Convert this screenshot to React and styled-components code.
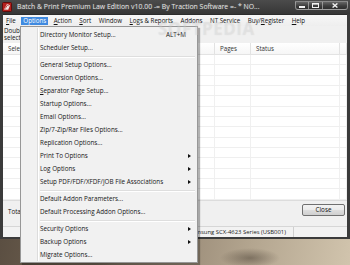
import styled, { createGlobalStyle } from "styled-components";

const GlobalStyle = createGlobalStyle`
  html, body {
    margin: 0;
    padding: 0;
  }
  body {
    width: 350px;
    height: 265px;
    overflow: hidden;
    font-family: "Open Sans", "DejaVu Sans", sans-serif;
  }
`;

const menuBarItems = [
  { label: "File", key: "F" },
  { label: "Options", active: true },
  { label: "Action", key: "A" },
  { label: "Sort", key: "S" },
  { label: "Window" },
  { label: "Logs & Reports", key: "L" },
  { label: "Addons" },
  { label: "NT Service" },
  { label: "Buy/Register", key: "R", keyAt: 4 },
  { label: "Help", key: "H" },
];

const optionItems = [
  { label: "Directory Monitor Setup...", shortcut: "ALT+M" },
  { label: "Scheduler Setup..." },
  { sep: true },
  { label: "General Setup Options..." },
  { label: "Conversion Options..." },
  { label: "Separator Page Setup...", underline: true },
  { label: "Startup Options..." },
  { label: "Email Options..." },
  { label: "Zip/7-Zip/Rar Files Options..." },
  { label: "Replication Options..." },
  { label: "Print To Options", sub: true },
  { label: "Log Options", sub: true },
  { label: "Setup PDF/FDF/XFDF/JOB File Associations", sub: true },
  { sep: true },
  { label: "Default Addon Parameters..." },
  { label: "Default Processing Addon Options..." },
  { sep: true },
  { label: "Security Options", sub: true },
  { label: "Backup Options", sub: true },
  { label: "Migrate Options..." },
];

const Desktop = styled.div`
  position: relative;
  width: 350px;
  height: 265px;
  overflow: hidden;
  background:
    radial-gradient(ellipse 40px 14px at 95px 252px, rgba(40, 32, 26, 0.55), transparent),
    radial-gradient(ellipse 30px 10px at 250px 258px, rgba(60, 50, 40, 0.45), transparent),
    linear-gradient(100deg, #4f443a 0%, #6e604f 28%, #958673 52%, #b3a58f 74%, #d1c4ad 100%);
`;

const Window = styled.div`
  width: 350px;
  height: 239px;
  background: #3b3b3b;
  display: flex;
  flex-direction: column;
`;

const TitleBar = styled.div`
  height: 14px;
  flex: none;
  display: flex;
  align-items: flex-start;
  padding-left: 2px;
  background: linear-gradient(#4b4b4b, #363636);
`;

const TitleIcon = styled.svg`
  flex: none;
  margin-top: 2px;
`;

const TitleText = styled.div`
  flex: 1;
  margin-left: 5px;
  font-size: 6.9px;
  line-height: 13px;
  color: #e4e4e4;
  white-space: nowrap;
  overflow: hidden;
  text-shadow: 0 0 2px rgba(255, 255, 255, 0.25);
`;

const Caption = styled.div`
  flex: none;
  display: flex;
  margin: 1px 2px 0 0;
`;

const CaptionButton = styled.div`
  width: ${(p) => p.w}px;
  height: 9px;
  box-sizing: border-box;
  border: 1px solid rgba(210, 210, 210, 0.55);
  border-left-width: ${(p) => (p.first ? 1 : 0)}px;
  border-radius: ${(p) => p.radius || "0"};
  background: linear-gradient(#666, #3d3d3d 55%, #2e2e2e);
  display: flex;
  align-items: center;
  justify-content: center;
`;

const Client = styled.div`
  flex: 1;
  min-height: 0;
  margin: 0 3px 2px;
  background: #f0f0f0;
  display: flex;
  flex-direction: column;
`;

const MenuBar = styled.div`
  height: 12px;
  flex: none;
  display: flex;
  align-items: center;
  gap: 3.5px;
  padding-left: 1px;
  background: linear-gradient(#f7f7f7, #eeeeee);
  border-top: 1px solid #2c2c2c;
  box-sizing: border-box;
`;

const MenuBarItem = styled.div`
  height: 8px;
  padding: 0 2px;
  font-size: 6.2px;
  line-height: 8px;
  white-space: nowrap;
  color: ${(p) => (p.active ? "#fff" : "#111")};
  background: ${(p) => (p.active ? "#3f8ae0" : "transparent")};
`;

const Hint = styled.div`
  height: 17px;
  flex: none;
  padding: 1px 0 0 1px;
  box-sizing: border-box;
  font-size: 6.2px;
  line-height: 7px;
  color: #111;
  white-space: nowrap;
  overflow: hidden;
`;

const Table = styled.div`
  height: 157px;
  flex: none;
  background: #fff;
  display: flex;
  flex-direction: column;
  overflow: hidden;
`;

const Columns = styled.div`
  display: grid;
  grid-template-columns: 212px 36px 89px 1fr;
  flex: none;
  height: ${(p) => p.h}px;
  box-sizing: border-box;
  border-bottom: 1px solid ${(p) => (p.head ? "#e3e3e3" : "#efefef")};
  background: ${(p) => (p.head ? "linear-gradient(#ffffff, #f6f6f6)" : "#fff")};
`;

const Cell = styled.div`
  border-right: 1px solid ${(p) => (p.head ? "#e2e2e2" : "#f0f0f0")};
  padding-left: 5px;
  font-size: 6.2px;
  line-height: 11px;
  color: #333;
  white-space: nowrap;
  overflow: hidden;
`;

const BottomPanel = styled.div`
  height: 26px;
  flex: none;
  box-sizing: border-box;
  border-top: 1px solid #dcdcdc;
  display: flex;
  justify-content: space-between;
  align-items: flex-start;
  padding: 0 2px 0 5px;
`;

const Total = styled.div`
  margin-top: 7px;
  font-size: 6.2px;
  line-height: 8px;
  color: #111;
`;

const CloseButton = styled.button`
  margin-top: 3px;
  width: 43px;
  height: 12px;
  padding: 0;
  border: 1px solid #707070;
  border-radius: 2px;
  background: linear-gradient(#f3f3f3 0%, #ebebeb 48%, #dddddd 52%, #cfcfcf 100%);
  font-family: "Open Sans", "DejaVu Sans", sans-serif;
  font-size: 6.3px;
  line-height: 10px;
  color: #111;
`;

const StatusBar = styled.div`
  height: 11px;
  flex: none;
  box-sizing: border-box;
  border-top: 1px solid #d6d6d6;
  display: flex;
  background: #f2f2f2;
`;

const StatusPanel = styled.div`
  width: ${(p) => p.w}px;
  flex: none;
  box-sizing: border-box;
  padding-left: 2px;
  border-right: 1px solid #cfcfcf;
  font-size: 5.9px;
  line-height: 10px;
  color: #222;
  white-space: nowrap;
  overflow: hidden;
`;

const Dropdown = styled.div`
  position: absolute;
  left: 20px;
  top: 26px;
  width: 178px;
  box-sizing: border-box;
  padding: 1px;
  border: 1px solid #979797;
  background: #f1f1f1;
  box-shadow: 2px 2px 1px rgba(0, 0, 0, 0.3);

  &::before {
    content: "";
    position: absolute;
    left: 16px;
    top: 1px;
    bottom: 1px;
    width: 1px;
    background: #dcdcdc;
    box-shadow: 1px 0 0 #fff;
  }
`;

const DropItem = styled.div`
  position: relative;
  height: 13px;
  display: flex;
  align-items: center;
  justify-content: space-between;
  padding: 0 ${(p) => (p.sub ? 5 : 10)}px 0 18px;
  font-size: 6.3px;
  color: #161616;
  white-space: nowrap;
`;

const Shortcut = styled.span`
  font-size: 6.3px;
`;

const Arrow = styled.span`
  width: 0;
  height: 0;
  border-left: 3px solid #111;
  border-top: 2.5px solid transparent;
  border-bottom: 2.5px solid transparent;
`;

const Separator = styled.div`
  position: relative;
  height: 4px;
  display: flex;
  align-items: center;
  margin: 0 1px 0 18px;

  &::before {
    content: "";
    flex: 1;
    height: 1px;
    background: #dedede;
    box-shadow: 0 1px 0 #fff;
  }
`;

const Watermark = styled.div`
  position: absolute;
  left: 158px;
  top: 17px;
  font-size: 17px;
  font-weight: 700;
  letter-spacing: 0.5px;
  color: rgba(255, 255, 255, 0.22);
  text-shadow: 0 0 1px rgba(120, 120, 120, 0.2);
  pointer-events: none;
`;

function Mnemonic({ label, k, at }) {
  if (!k) return label;
  const i = at ?? label.indexOf(k);
  return (
    <>
      {label.slice(0, i)}
      <u>{label[i]}</u>
      {label.slice(i + 1)}
    </>
  );
}

function AppIcon() {
  return (
    <TitleIcon width="10" height="10" viewBox="0 0 10 10">
      <rect x="0.5" y="0.5" width="9" height="9" rx="1" fill="#b5211e" stroke="#5e0d0c" />
      <path d="M2 7.5 L5 2 L8 3.2 L6.2 7.8 Z" fill="#f1e6e3" />
      <path d="M3.2 6.6 L5.3 3.2 L6.7 3.8" stroke="#b5211e" strokeWidth="0.8" fill="none" />
    </TitleIcon>
  );
}

export default function App() {
  const rows = Array.from({ length: 14 });
  return (
    <Desktop>
      <GlobalStyle />
      <Window>
        <TitleBar>
          <AppIcon />
          <TitleText>Batch &amp; Print Premium Law Edition v10.00 -= By Traction Software =- * NO...</TitleText>
          <Caption>
            <CaptionButton w={14} first radius="0 0 0 3px">
              <svg width="6" height="5" viewBox="0 0 6 5">
                <rect x="0" y="3" width="6" height="2" fill="#f2f2f2" />
              </svg>
            </CaptionButton>
            <CaptionButton w={14}>
              <svg width="7" height="5" viewBox="0 0 7 5">
                <rect x="0.5" y="0.5" width="6" height="4" fill="none" stroke="#f2f2f2" />
                <rect x="0" y="0" width="7" height="1.6" fill="#f2f2f2" />
              </svg>
            </CaptionButton>
            <CaptionButton w={25} radius="0 0 3px 0">
              <svg width="6" height="5" viewBox="0 0 6 5">
                <path d="M0.6 0.4 L5.4 4.6 M5.4 0.4 L0.6 4.6" stroke="#f2f2f2" strokeWidth="1.3" />
              </svg>
            </CaptionButton>
          </Caption>
        </TitleBar>
        <Client>
          <MenuBar>
            {menuBarItems.map((m) => (
              <MenuBarItem key={m.label} active={m.active}>
                <Mnemonic label={m.label} k={m.key} at={m.keyAt} />
              </MenuBarItem>
            ))}
          </MenuBar>
          <Hint>
            Double-click a file to open it, or
            <br />
            select files and press Delete to remove them.
          </Hint>
          <Table>
            <Columns head h={12}>
              <Cell head>Selected Files</Cell>
              <Cell head>Pages</Cell>
              <Cell head>Status</Cell>
              <Cell head />
            </Columns>
            {rows.map((_, i) => (
              <Columns key={i} h={10.35}>
                <Cell />
                <Cell />
                <Cell />
                <Cell />
              </Columns>
            ))}
          </Table>
          <BottomPanel>
            <Total>Total Files: 0</Total>
            <CloseButton>Close</CloseButton>
          </BottomPanel>
          <StatusBar>
            <StatusPanel w={184} />
            <StatusPanel w={107}>Samsung SCX-4623 Series (USB001)</StatusPanel>
          </StatusBar>
        </Client>
      </Window>

      <Dropdown>
        {optionItems.map((o, i) =>
          o.sep ? (
            <Separator key={i} />
          ) : (
            <DropItem key={i} sub={o.sub}>
              <span>{o.underline ? <Mnemonic label={o.label} k="S" /> : o.label}</span>
              {o.shortcut && <Shortcut>{o.shortcut}</Shortcut>}
              {o.sub && <Arrow />}
            </DropItem>
          )
        )}
      </Dropdown>
      <Watermark>SOFTPEDIA</Watermark>
    </Desktop>
  );
}
